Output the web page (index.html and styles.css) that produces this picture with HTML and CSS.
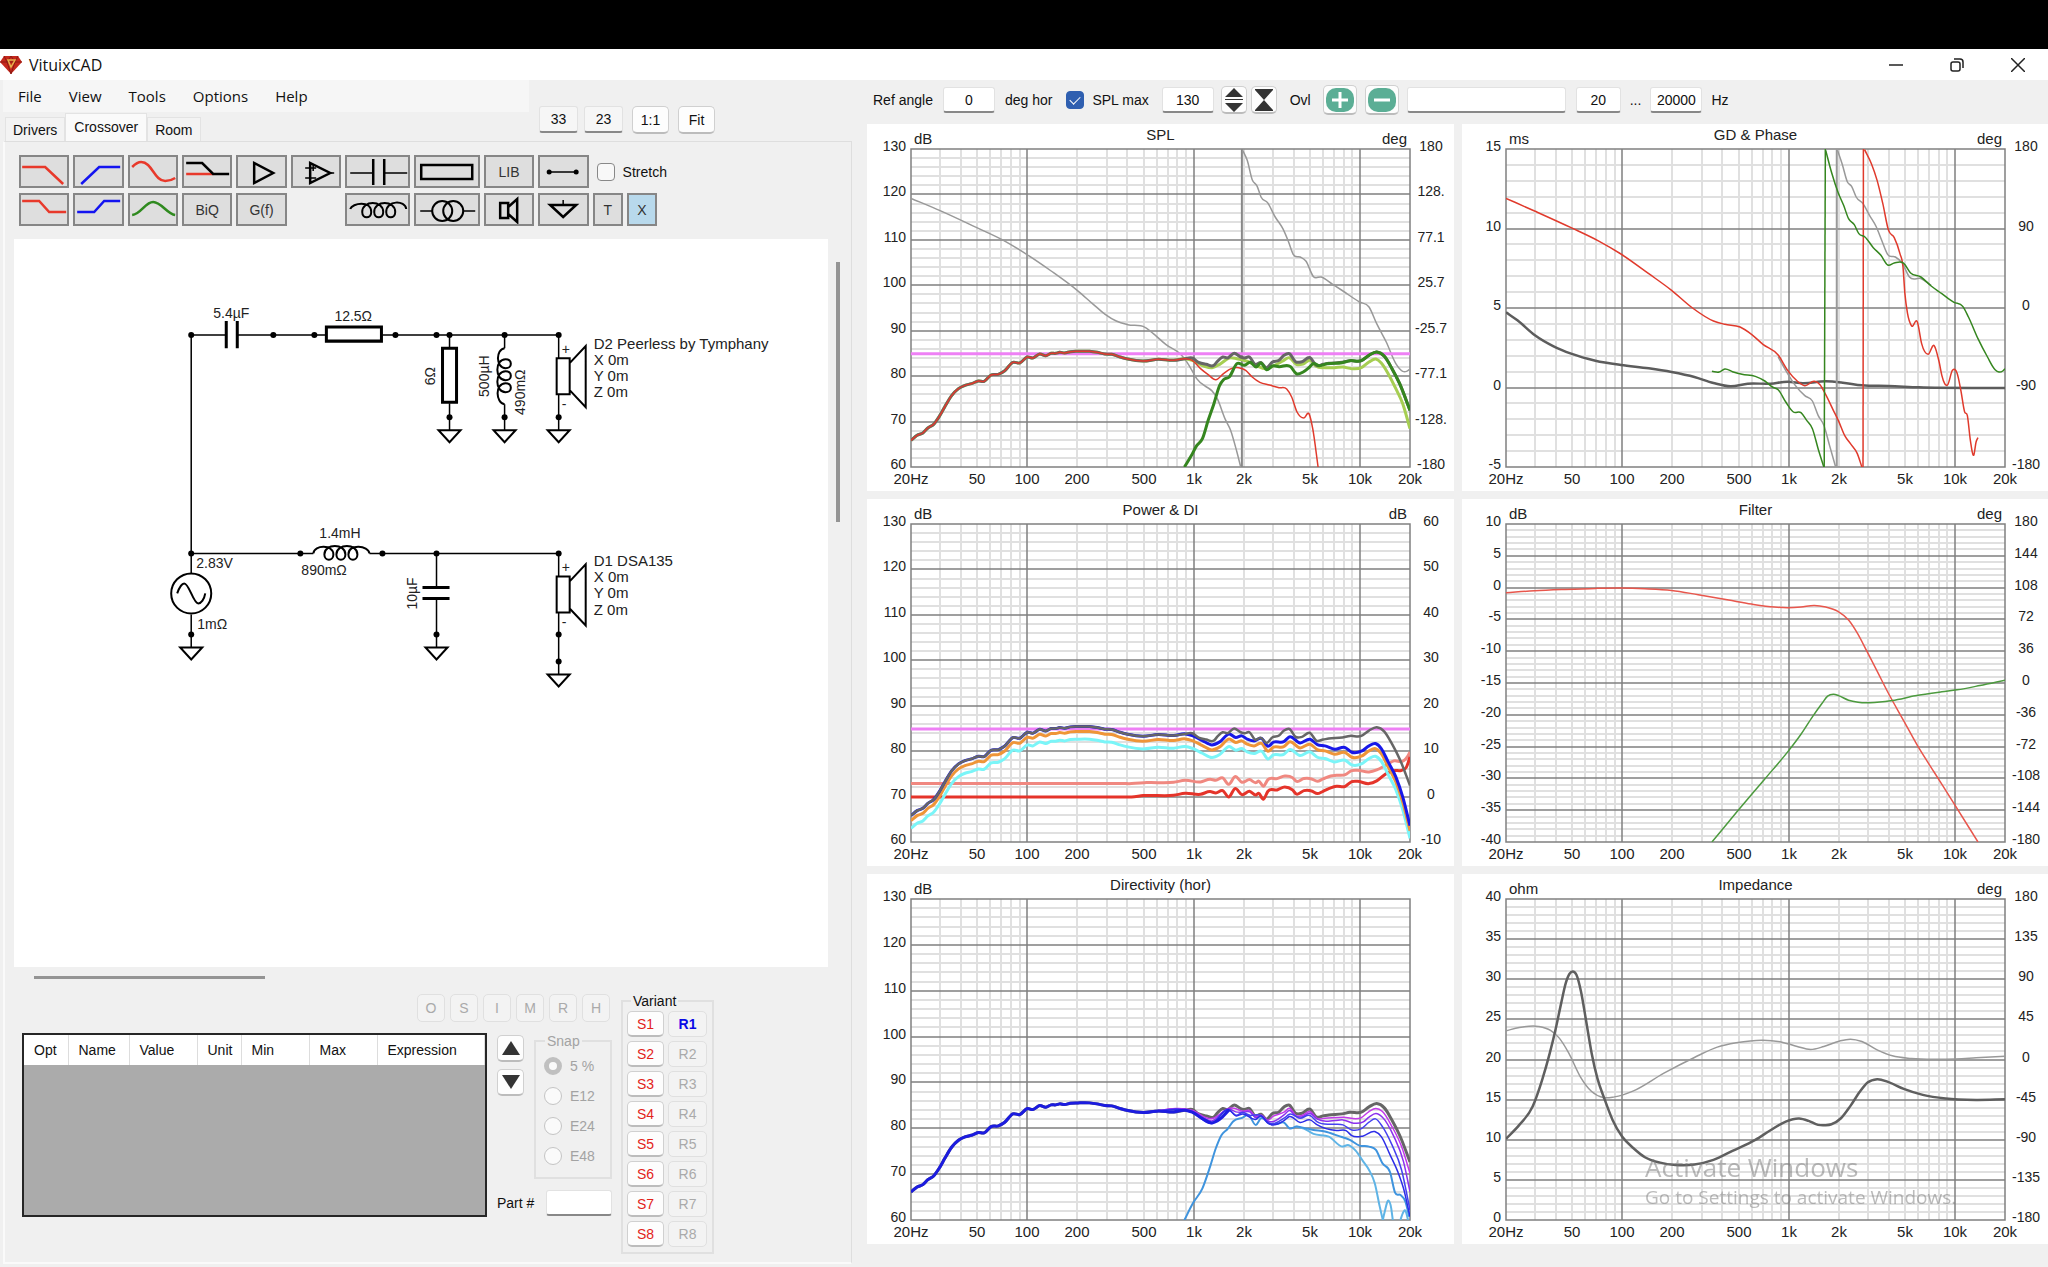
FILE: index.html
```html
<!DOCTYPE html>
<html lang="en">
  <head>
    <meta charset="UTF-8" />
    <meta name="viewport" content="width=device-width, initial-scale=1.0" />
    <title>VituixCAD</title>
    <link rel="stylesheet" href="styles.css">
  </head>
  <body>
    <header class="titlebar">
      <svg class="logo" width="22" height="18" viewBox="0 0 22 18">
        <path d="M4 0h14l4 6-11 12L0 6z" fill="#c5281c" />
        <path d="M4 0l3 6 4-6 4 6 3-6M0 6h22M7 6l4 12 4-12" fill="none" stroke="#8e1a12" />
        <path d="M8 4h7l-4 7z" fill="none" stroke="#e6b34d" stroke-width="1.5" />
      </svg>
      <h1>VituixCAD</h1>
      <div class="window-buttons">
        <button aria-label="Minimize"><svg width="14" height="14"><path d="M0 7h14" /></svg></button>
        <button aria-label="Restore">
          <svg width="14" height="14"><rect x="1" y="4" width="9" height="9" rx="2" /><path d="M4 1h6a3 3 0 0 1 3 3v6" /></svg>
        </button>
        <button aria-label="Close"><svg width="14" height="14"><path d="M0 0l14 14M14 0L0 14" /></svg></button>
      </div>
    </header>

    <main class="workspace">
      <section class="editor">
        <div class="editor-head">
          <div class="nav">
            <nav class="menu">
              <button>File</button>
              <button>View</button>
              <button>Tools</button>
              <button>Options</button>
              <button>Help</button>
            </nav>
            <div class="tabs">
              <button>Drivers</button>
              <button class="active">Crossover</button>
              <button>Room</button>
            </div>
          </div>
          <div class="view-size">
            <input class="field" type="text" value="33" aria-label="Width" />
            <input class="field" type="text" value="23" aria-label="Height" />
            <button class="btn">1:1</button>
            <button class="btn">Fit</button>
          </div>
        </div>

        <div class="page">
          <div class="parts">
            <button aria-label="Low pass"><svg viewBox="0 0 46 29"><path class="red" d="M1 10h23l18 17" /></svg></button>
            <button aria-label="High pass"><svg viewBox="0 0 46 29"><path class="blue" d="M6 27l18-17h21" /></svg></button>
            <button aria-label="Shelf"><svg viewBox="0 0 46 29"><path class="red" d="M2 10C6 6 8 5 11 5c11 0 13 19 24 19 4 0 7-1 10-3" /></svg></button>
            <button aria-label="Attenuator"><svg viewBox="0 0 46 29"><path class="red" d="M2 17h27" /><path d="M2 6h16l11 11h16" /></svg></button>
            <button aria-label="Buffer"><svg viewBox="0 0 46 29"><path d="M16 6v20l19-10z" /></svg></button>
            <button aria-label="Op amp"><svg viewBox="0 0 46 29"><path d="M17 6v20l20-10z" /><path class="thin" d="M12 11h11M12 21h11M37 16h4M20 8v6" /></svg></button>
            <button aria-label="Capacitor"><svg viewBox="0 0 61 29"><path class="thin" d="M3 16h23M37 16h23" /><path d="M26 2v26M37 2v26" /></svg></button>
            <button aria-label="Resistor"><svg viewBox="0 0 61 29"><rect x="5" y="8" width="51" height="14" /></svg></button>
            <button>LIB</button>
            <button aria-label="Wire"><svg viewBox="0 0 46 29"><path class="thin" d="M9 15h27" /><circle cx="9" cy="15" r="2.5" /><circle cx="36" cy="15" r="2.5" /></svg></button>
            <label class="check stretch"><input type="checkbox" />Stretch</label>

            <button aria-label="Low shelf"><svg viewBox="0 0 46 29"><path class="red" d="M1 6h17l10 11h17" /></svg></button>
            <button aria-label="High shelf"><svg viewBox="0 0 46 29"><path class="blue" d="M2 17h17L29 6h16" /></svg></button>
            <button aria-label="Peak"><svg viewBox="0 0 46 29"><path class="green" d="M2 20c9-1 13-13 21-13s14 12 22 13" /></svg></button>
            <button>BiQ</button>
            <button>G(f)</button>
            <button class="coil" aria-label="Inductor"><svg viewBox="0 0 61 29"><path d="M3 14c2-6 21-9 21 3 0 7-9 7-9 0 0-12 21-12 21 0 0 7-9 7-9 0 0-12 21-12 21 0 0 7-9 7-9 0 0-12 19-12 20-3" /></svg></button>
            <button aria-label="Transformer"><svg viewBox="0 0 61 29"><circle class="ring" cx="26" cy="16" r="10" /><circle class="ring" cx="37" cy="16" r="10" /><path class="thin" d="M4 16h12M47 16h12" /></svg></button>
            <button aria-label="Driver"><svg viewBox="0 0 46 29"><path d="M14 8h8v15h-8zM22 12l9-8v23l-9-8" /></svg></button>
            <button aria-label="Ground"><svg viewBox="0 0 46 29"><path d="M10 10h26l-13 12z" /><path class="thin" d="M23 5v5" /></svg></button>
            <button>T</button>
            <button class="selected">X</button>
          </div>

          <div class="sheet-row">
            <div class="sheet">
              <svg viewBox="0 0 813 680" preserveAspectRatio="xMinYMin meet">
                <defs>
                  <g id="ground"><path d="M0 0v13" /><path class="bold" d="M-11 13h22l-11 12z" /><circle r="3" /></g>
                  <g id="driver">
                    <path d="M0 0v23M0 59v22" />
                    <path class="bold" d="M-2 23h13v36h-13zM11 28l16-17v61l-16-17" />
                  </g>
                </defs>
                <path d="M177 96h35M223 96h88M368 96h176M177 96v238M177 375v20M177 314h122M355 314h189M422 314v34M422 359v36M544 395v27M435 96v12M435 164v14M490 96v13M490 165v13" />
                <path class="plate" d="M212 82v27M223 82v27M408 348h27M408 359h27" />
                <path class="plate box" d="M312 88h55v14h-55zM428 109h14v54h-14z" />
                <path class="bold" d="M490 109c-9 1-9 20 1 20 7 0 7-9 0-9-11 0-11 21 0 21 7 0 7-9 0-9-11 0-11 21 0 21 7 0 7-9 0-9-11 0-10 20-1 21" />
                <path class="bold" d="M299 314c1-9 20-9 20 1 0 7-9 7-9 0 0-11 21-11 21 0 0 7-9 7-9 0 0-11 21-11 21 0 0 7-9 7-9 0 0-11 20-9 21-1" />
                <circle class="bold" cx="177" cy="354" r="20" />
                <path class="bold" d="M163 354c2-6 5-10 7-10 5 0 9 20 14 20 3 0 6-4 7-10" />
                <g class="dots">
                  <circle cx="177" cy="96" r="3" /><circle cx="259" cy="96" r="3" /><circle cx="300" cy="96" r="3" />
                  <circle cx="381" cy="96" r="3" /><circle cx="422" cy="96" r="3" /><circle cx="435" cy="96" r="3" />
                  <circle cx="490" cy="96" r="3" /><circle cx="544" cy="96" r="3" /><circle cx="177" cy="314" r="3" />
                  <circle cx="286" cy="314" r="3" /><circle cx="368" cy="314" r="3" /><circle cx="422" cy="314" r="3" />
                  <circle cx="544" cy="314" r="3" /><circle cx="544" cy="395" r="3" />
                  <use href="#ground" x="435" y="178" /><use href="#ground" x="490" y="178" /><use href="#ground" x="544" y="178" />
                  <use href="#ground" x="177" y="395" /><use href="#ground" x="422" y="395" /><use href="#ground" x="544" y="422" />
                </g>
                <use href="#driver" x="544" y="96" /><use href="#driver" x="544" y="314" />
                <text x="199" y="79">5.4µF</text>
                <text x="320" y="82">12.5Ω</text>
                <text x="305" y="299">1.4mH</text>
                <text x="287" y="336">890mΩ</text>
                <text x="182" y="329">2.83V</text>
                <text x="183" y="390">1mΩ</text>
                <text class="up" transform="translate(420 137) rotate(-90)">6Ω</text>
                <text class="up" transform="translate(474 137) rotate(-90)">500µH</text>
                <text class="up" transform="translate(510 153) rotate(-90)">490mΩ</text>
                <text class="up" transform="translate(403 354) rotate(-90)">10µF</text>
                <text x="547" y="115">+</text><text x="547" y="170">-</text>
                <text x="547" y="333">+</text><text x="547" y="388">-</text>
                <g class="driver-text">
                  <text x="579" y="110">D2 Peerless by Tymphany</text>
                  <text x="579" y="126">X 0m</text><text x="579" y="142">Y 0m</text><text x="579" y="158">Z 0m</text>
                  <text x="579" y="327">D1 DSA135</text>
                  <text x="579" y="343">X 0m</text><text x="579" y="359">Y 0m</text><text x="579" y="376">Z 0m</text>
                </g>
              </svg>
            </div>
            <div class="vscroll"></div>
          </div>
          <div class="hscroll"></div>

          <div class="bottom">
            <div class="optimizer">
              <div class="flags">
                <button class="btn" disabled>O</button>
                <button class="btn" disabled>S</button>
                <button class="btn" disabled>I</button>
                <button class="btn" disabled>M</button>
                <button class="btn" disabled>R</button>
                <button class="btn" disabled>H</button>
              </div>
              <div class="param-row">
                <div class="params">
                  <table>
                    <colgroup>
                      <col class="w-opt" /><col class="w-name" /><col class="w-num" /><col class="w-opt" /><col class="w-num" /><col class="w-num" /><col />
                    </colgroup>
                    <thead>
                      <tr><th>Opt</th><th>Name</th><th>Value</th><th>Unit</th><th>Min</th><th>Max</th><th>Expression</th></tr>
                    </thead>
                  </table>
                </div>
                <div class="side">
                  <div class="move">
                    <button class="btn" aria-label="Move up"><svg width="18" height="14"><path d="M0 14L9 0l9 14z" /></svg></button>
                    <button class="btn" aria-label="Move down"><svg width="18" height="14"><path d="M0 0h18L9 14z" /></svg></button>
                  </div>
                  <fieldset class="snap" disabled>
                    <legend>Snap</legend>
                    <label><input type="radio" name="snap" checked />5 %</label>
                    <label><input type="radio" name="snap" />E12</label>
                    <label><input type="radio" name="snap" />E24</label>
                    <label><input type="radio" name="snap" />E48</label>
                  </fieldset>
                  <div class="part-no">
                    <label for="partNo">Part #</label>
                    <input class="field" type="text" id="partNo" />
                  </div>
                </div>
              </div>
            </div>
            <fieldset class="variant">
              <legend>Variant</legend>
              <button class="btn save">S1</button><button class="btn current">R1</button>
              <button class="btn save">S2</button><button class="btn" disabled>R2</button>
              <button class="btn save">S3</button><button class="btn" disabled>R3</button>
              <button class="btn save">S4</button><button class="btn" disabled>R4</button>
              <button class="btn save">S5</button><button class="btn" disabled>R5</button>
              <button class="btn save">S6</button><button class="btn" disabled>R6</button>
              <button class="btn save">S7</button><button class="btn" disabled>R7</button>
              <button class="btn save">S8</button><button class="btn" disabled>R8</button>
            </fieldset>
          </div>
        </div>
      </section>

      <section class="results">
        <div class="options">
          <label class="ref">Ref angle <input class="field" type="text" value="0" /> deg hor</label>
          <label class="check"><input type="checkbox" checked />SPL max</label>
          <input class="field" type="text" value="130" aria-label="SPL max" />
          <div class="zoomers">
            <button class="btn" aria-label="Expand"><svg width="18" height="24"><path d="M0 9l9-9 9 9zM0 11h18v1H0zM0 15h18l-9 9z" /></svg></button>
            <button class="btn" aria-label="Collapse"><svg width="18" height="22"><path d="M0 0h18v1L9 11l9 10v1H0v-1l9-10L0 1z" /></svg></button>
          </div>
          <span>Ovl</span>
          <div class="overlay">
            <button class="btn" aria-label="Add overlay"><svg width="28" height="24"><rect width="28" height="24" rx="10" /><path d="M6 12h16M14 4v16" /></svg></button>
            <button class="btn" aria-label="Remove overlay"><svg width="28" height="24"><rect width="28" height="24" rx="10" /><path d="M6 12h16" /></svg></button>
            <input class="field" type="text" aria-label="Overlay" />
          </div>
          <div class="range">
            <input class="field" type="text" value="20" aria-label="From" />
            <span>...</span>
            <input class="field" type="text" value="20000" aria-label="To" />
            <span>Hz</span>
          </div>
        </div>
        <div class="charts">
          <figure class="chart" id="spl"></figure>
          <figure class="chart" id="gd"></figure>
          <figure class="chart" id="power"></figure>
          <figure class="chart" id="filter"></figure>
          <figure class="chart" id="directivity"></figure>
          <figure class="chart" id="impedance"></figure>
        </div>
      </section>
    </main>

    <div class="activate">
      <p class="activate-title">Activate Windows</p>
      <p>Go to Settings to activate Windows.</p>
    </div>

    <script src="charts.js"></script>
  </body>
</html>
```
FILE: styles.css
```css
* {
  box-sizing: border-box;
}

body {
  margin: 0;
  min-height: 100vh;
  display: flex;
  flex-direction: column;
  border-top: 49px solid #000;
  background-color: #f0f0f0;
  color: #111;
  font-family: "Liberation Sans", Arial, sans-serif;
  font-size: 14px;
}

button,
input {
  font: inherit;
  color: inherit;
  margin: 0;
}

button {
  padding: 0;
}

button svg {
  display: block;
}

/* title bar */
.titlebar {
  display: flex;
  align-items: center;
  height: 31px;
  background-color: #fff;
  font-family: "Open Sans", sans-serif;
}

.titlebar h1 {
  margin: 0 0 0 7px;
  font-size: 16px;
  font-weight: normal;
}

.window-buttons {
  display: flex;
  margin-left: auto;
}

.window-buttons button {
  display: flex;
  align-items: center;
  justify-content: center;
  width: 61px;
  height: 28px;
  border: 0;
  background: none;
}

.window-buttons svg {
  fill: none;
  stroke: #222;
  stroke-width: 1.5;
}

.workspace {
  flex: 1;
  display: grid;
  grid-template-columns: 867fr 1181fr;
}

/* shared controls */
.field {
  width: 52px;
  height: 26px;
  padding: 0;
  border: 1px solid #e2e2e2;
  border-bottom: 2px solid #888;
  border-radius: 3px;
  background-color: #fff;
  text-align: center;
}

.btn {
  display: flex;
  align-items: center;
  justify-content: center;
  border: 1px solid #d0d0d0;
  border-bottom: 2px solid #bcbcbc;
  border-radius: 5px;
  background-color: #fdfdfd;
}

.btn:disabled {
  border: 1px solid #e0e0e0;
  background-color: #f3f3f3;
  color: #aaa;
}

.check {
  display: flex;
  align-items: center;
  gap: 8px;
  white-space: nowrap;
}

.check input {
  appearance: none;
  flex-shrink: 0;
  width: 18px;
  height: 18px;
  border: 1px solid #888;
  border-radius: 4px;
  background-color: #f8f8f8;
}

.check input:checked {
  border-color: #2f5fb0;
  background-color: #2f5fb0;
}

.check input:checked::before {
  content: "";
  display: block;
  width: 9px;
  height: 5px;
  margin: 4px 0 0 3px;
  border-left: 1px solid #fff;
  border-bottom: 1px solid #fff;
  transform: rotate(-45deg);
}

/* left side */
.editor {
  display: flex;
  flex-direction: column;
  padding: 0 15px 3px 3px;
}

.editor-head {
  display: flex;
  height: 61px;
}

.nav {
  width: 526px;
}

.menu {
  display: flex;
  align-items: center;
  gap: 27px;
  height: 32px;
  padding-left: 15px;
  background-color: #f6f6f6;
  font-family: "Open Sans", sans-serif;
  font-size: 15px;
}

.menu button {
  border: 0;
  background: none;
}

.tabs {
  display: flex;
  align-items: flex-end;
  height: 29px;
  padding: 0 2px;
}

.tabs button {
  height: 24px;
  padding: 0 7px;
  border: 1px solid #e3e3e3;
  border-bottom: 0;
  background-color: #f3f3f3;
}

.tabs .active {
  height: 28px;
  padding: 0 8px 2px;
  background-color: #fafafa;
}

.view-size {
  display: flex;
  gap: 6px;
  padding: 26px 0 0 10px;
}

.view-size .field {
  width: 39px;
  height: 27px;
  background-color: #f6f6f6;
}

.view-size .btn {
  width: 37px;
  height: 28px;
  margin-left: 3px;
}

.page {
  flex: 1;
  display: flex;
  flex-direction: column;
  padding: 13px 23px 8px 9px;
  border: 1px solid #dedede;
  border-left: 2px solid #fafafa;
  border-bottom: 2px solid #fafafa;
}

.parts {
  display: grid;
  grid-template-columns: repeat(6, 50fr) 65fr 65fr 50fr 50fr 30fr 30fr;
  grid-auto-rows: 33px;
  gap: 5px 4px;
  width: 638px;
  margin-left: 5px;
}

.parts button {
  border: 2px solid #868686;
  background-color: #dedede;
  color: #333;
}

.parts .selected {
  background-color: #b8d9ec;
}

.parts .coil {
  grid-column: 7;
}

.parts svg {
  width: 100%;
  height: 100%;
  fill: none;
  stroke: #000;
  stroke-width: 2.5;
}

.parts circle {
  fill: #000;
  stroke: none;
}

.parts .ring {
  fill: none;
  stroke: #000;
  stroke-width: 2;
}

.parts .thin {
  stroke-width: 1.5;
}

.parts .coil svg {
  stroke-width: 2;
}

.parts .red {
  stroke: #e8392b;
}

.parts .blue {
  stroke: #1414f0;
}

.parts .green {
  stroke: #2f8a1f;
}

.stretch {
  grid-column: 11 / 13;
  padding-left: 4px;
}

.sheet-row {
  flex: 1;
  display: flex;
  margin-top: 13px;
}

.sheet {
  flex: 1;
  background-color: #fff;
}

.sheet svg {
  display: block;
  width: 100%;
  fill: none;
  stroke: #000;
  stroke-width: 1.5;
}

.sheet .bold {
  fill: none;
  stroke-width: 2;
}

.sheet .plate {
  stroke-width: 3;
}

.sheet .box {
  fill: none;
}

.dots circle,
#ground circle {
  fill: #000;
  stroke: none;
}

.sheet text {
  fill: #222;
  stroke: none;
  font-size: 14px;
}

.sheet .up {
  text-anchor: middle;
}

.sheet .driver-text text {
  font-size: 15px;
}

.vscroll {
  width: 4px;
  height: 260px;
  margin: 23px -12px 0 8px;
  background-color: #949494;
}

.hscroll {
  width: 231px;
  height: 3px;
  margin: 9px 0 14px 20px;
  background-color: #949494;
}

.bottom {
  display: flex;
  align-items: flex-start;
  gap: 9px;
  padding: 0 114px 0 8px;
}

.optimizer {
  flex: 1;
}

.flags {
  display: flex;
  justify-content: flex-end;
  gap: 5px;
  margin-bottom: 11px;
  padding: 1px 2px 0 0;
}

.flags .btn {
  width: 28px;
  height: 28px;
}

.param-row {
  display: flex;
  gap: 10px;
}

.params {
  flex: 1;
  height: 184px;
  border: 2px solid #262626;
  background-color: #ababab;
}

.params table {
  width: 100%;
  table-layout: fixed;
  border-collapse: collapse;
}

.params th {
  height: 30px;
  padding: 0 0 0 10px;
  border-right: 1px solid #ddd;
  background-color: #fff;
  font-weight: normal;
  text-align: left;
}

.w-opt {
  width: 44px;
}

.w-name {
  width: 61px;
}

.w-num {
  width: 68px;
}

.side {
  display: grid;
  grid-template-columns: 27px 78px;
  grid-template-rows: 146px 27px;
  gap: 10px;
}

.move .btn {
  width: 27px;
  height: 27px;
  margin: 2px 0 7px;
}

.move svg,
.zoomers svg {
  fill: #333;
}

fieldset {
  margin: 0;
  border: 2px solid #e0e0e0;
}

.snap {
  display: flex;
  flex-direction: column;
  gap: 12px;
  padding: 8px;
  color: #a3a3a3;
}

.snap legend {
  margin-left: 1px;
  padding: 0 2px;
}

.snap label {
  display: flex;
  align-items: center;
  gap: 8px;
  height: 18px;
  white-space: nowrap;
}

.snap input {
  appearance: none;
  width: 18px;
  height: 18px;
  border: 1px solid #c4c4c4;
  border-radius: 50%;
  background-color: #fafafa;
}

.snap input:checked {
  border: 5px solid #c0c0c0;
}

.part-no {
  grid-column: 1 / 3;
  display: flex;
  align-items: center;
  justify-content: space-between;
}

.part-no .field {
  width: 66px;
}

.variant {
  display: grid;
  grid-template-columns: 37px 39px;
  grid-auto-rows: 26px;
  gap: 4px;
  width: 93px;
  padding: 2px 4px 5px;
}

.variant legend {
  margin-left: 4px;
  padding: 0 2px;
}

.save {
  color: #e2231a;
}

.current {
  border: 1px solid #e0e0e0;
  background-color: #f3f3f3;
  color: #0a0ae6;
  font-weight: bold;
}

/* right side */
.results {
  display: flex;
  flex-direction: column;
}

.options {
  display: flex;
  align-items: center;
  gap: 13px;
  height: 44px;
  padding: 0 6px 4px;
}

.ref {
  display: flex;
  align-items: center;
  gap: 10px;
}

.options .check {
  margin-left: 1px;
}

.zoomers {
  display: flex;
  gap: 4px;
  margin-left: -6px;
}

.zoomers .btn {
  width: 26px;
  height: 28px;
}

.overlay {
  display: flex;
  align-items: center;
  gap: 8px;
  margin-left: -1px;
}

.overlay .btn {
  width: 34px;
  height: 30px;
}

.overlay svg {
  fill: #5bae95;
}

.overlay path {
  stroke: #fff;
  stroke-width: 3;
}

.overlay .field {
  width: 159px;
}

.range {
  display: flex;
  align-items: center;
  gap: 9px;
  margin-left: -3px;
}

.range .field:first-child {
  width: 45px;
}

.charts {
  flex: 1;
  display: grid;
  grid-template-columns: 1fr 1fr;
  grid-template-rows: 367fr 367fr 370fr;
  gap: 8px;
  padding-bottom: 23px;
}

.chart {
  min-width: 0;
  min-height: 260px;
  margin: 0;
  background-color: #fff;
  overflow: hidden;
}

.chart svg {
  display: block;
}

.chart text {
  fill: #222;
  font-size: 15px;
}

.chart .tick {
  font-size: 14px;
}

.minor {
  stroke: #e0e0e0;
  stroke-width: 2;
}

.major {
  fill: none;
  stroke: #808080;
  stroke-width: 1.5;
}

.trace {
  fill: none;
  stroke-linejoin: round;
  vector-effect: non-scaling-stroke;
}

.activate {
  position: fixed;
  right: 83px;
  bottom: 56px;
  width: 320px;
  color: rgba(120, 120, 120, 0.5);
  font-family: "Open Sans", sans-serif;
  font-size: 19px;
  line-height: 28px;
  white-space: nowrap;
  pointer-events: none;
}

.activate p {
  margin: 0;
}

.activate-title {
  font-size: 26px;
  line-height: 32px;
}
```
FILE: charts.js
```js
const FREQS = [20, 50, 100, 200, 500, 1000, 2000, 5000, 10000, 20000];
const PAD = { top: 25, right: 44, bottom: 24, left: 44 };

const shift = (points, dy) =>
  points.replace(/(\d+),(\d+)/g, (m, x, y) => `${x},${+y + dy}`);

// on-axis response of the woofer range, shared by several charts
const low =
  "134,1200 150,1185 165,1178 178,1163 193,1152 208,1128 222,1100 240,1066 258,1045 275,1035 292,1030 310,1022 325,1023 343,1004 362,1002 378,992 400,966 418,968 438,950 452,953 470,941 486,946 500,939 512,939 522,936 535,938 550,934 570,933 600,933 620,936 640,941 658,942 680,950 700,956 740,962 780,957 820,960 850,955 ";
const total =
  low +
  "868,953 885,966 905,972 925,975 935,962 948,950 960,953 978,939 995,950 1005,953 1018,950 1032,972 1048,967 1062,982 1078,965 1095,960 1108,945 1122,940 1138,964 1155,964 1176,952 1192,975 1210,972 1225,969 1260,966 1280,961 1310,961 1330,945 1350,935 1370,948 1390,985 1410,1030 1437,1110";
const power =
  low +
  "868,960 895,975 920,988 940,979 965,955 982,966 998,961 1012,971 1030,976 1050,969 1066,992 1080,980 1108,978 1122,964 1150,982 1176,971 1195,987 1215,991 1240,1001 1268,996 1285,1010 1310,1007 1330,991 1347,984 1362,999 1380,1039 1400,1084 1418,1144 1437,1230";

const charts = {
  spl: {
    title: "SPL",
    left: ["dB", 130, 120, 110, 100, 90, 80, 70, 60],
    right: ["deg", "180", "128.", "77.1", "25.7", "-25.7", "-77.1", "-128.", "-180"],
    area: [134, 326, 1303, 954],
    traces: [
      ["#999", 1.5, "134,474 210,511 300,559 380,603 436,642 500,692 568,750 610,792 641,822 670,842 700,853 745,861 770,883 800,913 840,944 855,966 880,1015 935,1078 955,1138 968,1168 985,1235 995,1280"],
      ["#888", 2, "998,1280 998,326"],
      ["#999", 1.5, "1000,330 1012,360 1025,418 1038,438 1048,470 1065,487 1085,530 1105,565 1120,605 1132,642 1150,650 1165,662 1185,709 1205,710 1235,732 1262,752 1305,785 1330,800 1350,850 1375,905 1400,970 1418,993 1428,993 1437,986"],
      ["#ee80f5", 3, "134,940 1437,940"],
      ["#a6ce52", 3, low + "868,960 900,978 920,982 940,972 965,953 985,955 1010,962 1035,975 1060,985 1085,974 1105,962 1122,952 1140,972 1158,971 1176,960 1192,978 1215,982 1240,982 1262,980 1285,985 1310,982 1330,965 1348,956 1362,968 1380,1000 1400,1045 1418,1090 1437,1165"],
      ["#666", 3, total],
      ["#e03a2c", 1.5, low + "868,960 890,985 910,1003 930,1018 950,1000 970,985 990,982 1008,990 1025,1010 1045,1026 1070,1034 1095,1042 1115,1046 1128,1070 1142,1115 1160,1133 1174,1122 1183,1165 1197,1280"],
      ["#35861f", 3, "848,1280 865,1248 880,1216 895,1195 910,1140 925,1090 940,1035 950,1018 965,1010 985,970 1005,975 1020,966 1035,980 1048,968 1062,988 1078,977 1095,979 1125,979 1140,1000 1158,995 1172,983 1184,970 1200,976 1220,970 1260,967 1280,961 1310,961 1330,945 1350,935 1370,948 1390,985 1410,1030 1437,1110"],
    ],
  },
  gd: {
    title: "GD & Phase",
    left: ["ms", 15, 10, 5, 0, -5],
    right: ["deg", 180, 90, 0, -90, -180],
    area: [145, 326, 1311, 954],
    traces: [
      ["#5c5c5c", 2.5, "145,816 175,840 220,884 270,918 316,940 380,961 447,974 520,984 580,995 640,1010 690,1028 735,1038 780,1030 840,1030 885,1024 925,1029 985,1023 1030,1027 1080,1035 1150,1037 1230,1041 1456,1043"],
      ["#999", 1.5, "860,950 885,1000 905,1035 930,1066 950,1082 965,1125 980,1155 995,1215 1011,1280"],
      ["#999", 2, "1014,1280 1014,326"],
      ["#999", 1.5, "1016,330 1028,370 1042,425 1053,438 1065,470 1083,490 1100,525 1118,560 1132,600 1148,643 1168,650 1185,667 1205,710 1235,715 1262,735"],
      ["#e03a2c", 1.5, "145,474 220,512 316,562 390,603 447,641 520,700 580,750 635,803 690,842 720,852 760,860 790,882 820,912 860,944 885,990 910,1022 930,1036 955,1023 970,1033 985,1063 1005,1110 1018,1140 1035,1186 1050,1210 1068,1240 1080,1280"],
      ["#e03a2c", 1.5, "1083,1280 1084,326"],
      ["#e03a2c", 1.5, "1087,328 1105,370 1120,420 1135,490 1150,570 1165,592 1180,640 1188,680 1193,760 1200,820 1210,856 1226,846 1237,910 1254,942 1270,916 1283,965 1290,1005 1305,1034 1318,990 1330,998 1340,1050 1350,1115 1357,1125 1365,1200 1374,1244 1380,1205 1385,1192"],
      ["#35861f", 1.5, "686,993 705,995 720,986 740,994 765,1002 800,1008 825,1022 845,1040 860,1048 880,1085 900,1115 920,1117 935,1140 950,1165 965,1225 980,1280"],
      ["#35861f", 1.5, "981,1280 984,326"],
      ["#35861f", 1.5, "985,330 1000,395 1018,458 1032,495 1045,535 1060,553 1072,580 1088,590 1110,622 1130,645 1148,674 1165,668 1190,669 1208,698 1235,710 1262,737 1290,760 1322,786 1345,798 1360,830 1385,895 1410,950 1430,988 1440,995 1450,992 1456,985"],
    ],
  },
  power: {
    title: "Power & DI",
    left: ["dB", 130, 120, 110, 100, 90, 80, 70, 60],
    right: ["dB", 60, 50, 40, 30, 20, 10, 0, -10],
    area: [134, 102, 1303, 953],
    traces: [
      ["#ee80f5", 3, "134,716 1437,716"],
      ["#f08880", 3, "134,880 690,880 710,880 750,877 820,876 850,870 890,875 915,867 930,870 948,863 964,882 980,859 998,876 1018,868 1035,877 1042,872 1054,888 1066,868 1090,865 1110,857 1130,862 1140,873 1160,865 1180,866 1195,873 1210,866 1230,857 1245,855 1268,853 1285,841 1300,840 1330,845 1350,839 1375,824 1395,812 1420,812 1430,800 1437,785"],
      ["#e5342a", 3, "134,920 690,920 710,920 740,916 820,915 850,909 890,912 915,904 930,908 948,901 964,920 980,895 998,913 1018,903 1035,914 1042,909 1054,927 1066,903 1090,899 1110,890 1130,899 1140,911 1160,901 1180,902 1195,910 1210,903 1230,893 1245,888 1268,888 1285,874 1300,873 1330,880 1350,872 1375,850 1395,841 1415,840 1428,830 1437,800"],
      ["#7af5f8", 3, shift(power, -186)],
      ["#ef9538", 3, shift(power, -209)],
      ["#1818e8", 3, shift(power, -224)],
      ["#666", 2.5, shift(total, -224)],
    ],
  },
  filter: {
    title: "Filter",
    left: ["dB", 10, 5, 0, -5, -10, -15, -20, -25, -30, -35, -40],
    right: ["deg", 180, 144, 108, 72, 36, 0, -36, -72, -108, -144, -180],
    area: [145, 102, 1311, 953],
    traces: [
      ["#e8564c", 1.5, "145,308 220,302 300,298 380,295 447,294 510,296 580,301 650,314 730,330 790,342 850,351 885,353 920,351 955,346 985,351 1017,364 1045,390 1070,433 1092,481 1120,543 1150,610 1190,692 1225,764 1270,846 1320,936 1385,1055"],
      ["#4c9a3e", 1.5, "686,1055 755,960 825,866 885,785 920,732 950,680 975,640 990,618 1005,612 1020,617 1045,630 1070,636 1090,638 1120,636 1160,631 1220,617 1290,605 1330,599 1390,586 1456,570"],
    ],
  },
  directivity: {
    title: "Directivity (hor)",
    left: ["dB", 130, 120, 110, 100, 90, 80, 70, 60],
    right: [""],
    area: [134, 118, 1303, 962],
    traces: [
      ["#5fb4e6", 2, "1140,800 1160,806 1185,822 1225,830 1262,860 1275,855 1295,872 1315,905 1330,930 1345,970 1358,1040 1366,1080"],
      ["#5fb4e6", 2, "1366,1080 1370,1060 1381,1022 1388,1045 1392,1080"],
      ["#5fb4e6", 2, "1412,1080 1418,1060 1425,1052 1432,1080"],
      ["#3f94de", 2, "848,1080 870,1030 895,985 915,920 930,865 945,825 960,808 975,785 1000,773 1015,765 1035,795 1048,775 1068,790 1090,792 1108,788 1122,805 1140,800 1160,804 1185,810 1215,815 1250,828 1280,840 1305,857 1330,860 1348,870 1365,910 1385,937 1398,998 1412,1005 1425,1025 1435,1070"],
      ["#666", 3, shift(total, -204)],
      ["#c238ea", 1.5, "740,757 868,751 920,776 948,757 965,745 978,745 1000,754 1018,752 1035,770 1048,765 1066,781 1080,769 1108,757 1122,745 1140,768 1155,767 1176,755 1195,776 1215,775 1262,772 1310,773 1330,755 1348,746 1365,755 1390,800 1415,860 1437,940"],
      ["#8a30ee", 1.5, "740,758 868,753 920,783 965,747 982,756 1000,757 1018,756 1035,773 1048,767 1066,784 1108,765 1122,752 1140,770 1155,771 1176,760 1195,778 1240,782 1262,780 1290,790 1315,786 1330,772 1348,761 1365,772 1395,830 1420,905 1437,995"],
      ["#4440f0", 1.5, "740,758 868,756 920,788 965,750 982,766 1000,758 1018,766 1048,767 1066,788 1108,775 1122,763 1150,775 1176,767 1195,786 1240,793 1262,795 1285,810 1310,806 1330,787 1347,777 1365,800 1390,855 1415,930 1437,1050"],
      ["#2c2ce8", 1.5, "740,759 868,757 920,791 965,750 982,768 1000,762 1035,778 1048,768 1066,790 1108,782 1122,770 1150,788 1176,780 1195,795 1245,812 1270,812 1285,827 1315,828 1345,815 1362,830 1385,885 1405,935 1420,985 1437,1070"],
      ["#1c1ce0", 3, shift(low, -204) + "868,757 895,776 920,789 940,778 965,750"],
    ],
  },
  impedance: {
    title: "Impedance",
    left: ["ohm", 40, 35, 30, 25, 20, 15, 10, 5, 0],
    right: ["deg", 180, 135, 90, 45, 0, -45, -90, -135, -180],
    area: [145, 118, 1311, 962],
    traces: [
      ["#999", 1.5, "145,513 180,503 230,500 262,512 285,535 310,580 340,650 370,695 400,713 430,711 480,693 560,640 640,593 700,562 750,549 820,541 870,547 910,560 945,569 980,560 1020,544 1050,538 1080,545 1120,570 1160,588 1210,596 1300,598 1380,594 1456,589"],
      ["#5f5f5f", 2.5, "145,837 180,795 215,740 240,660 260,580 275,510 290,430 302,370 312,342 320,335 330,345 342,395 355,480 370,580 385,655 403,715 425,780 450,830 480,865 510,892 550,908 590,915 640,914 690,900 740,873 800,840 840,811 880,785 915,776 940,783 965,795 985,796 1000,793 1025,775 1050,738 1075,695 1095,668 1120,658 1150,667 1190,687 1240,705 1300,716 1380,720 1456,718"],
    ],
  },
};

// cubic through the points, slopes weighted by the spacing on the x axis
function smooth(points) {
  const p = points.trim().split(" ").map((s) => s.split(",").map(Number));
  if (p.length === 2) return `M${p[0]}L${p[1]}`;
  const last = p.length - 1;
  const step = (i) => (p[i + 1][1] - p[i][1]) / (p[i + 1][0] - p[i][0]);
  const slope = (i) => {
    if (i === 0) return step(0);
    if (i === last) return step(last - 1);
    const h0 = p[i][0] - p[i - 1][0];
    const h1 = p[i + 1][0] - p[i][0];
    return (step(i - 1) * h1 + step(i) * h0) / (h0 + h1);
  };
  let d = `M${p[0]}`;
  for (let i = 0; i < last; i++) {
    const [ax, ay] = p[i];
    const [bx, by] = p[i + 1];
    const t = (bx - ax) / 3;
    d += `C${ax + t} ${ay + slope(i) * t} ${bx - t} ${by - slope(i + 1) * t} ${bx} ${by}`;
  }
  return d;
}

function freqLabel(f) {
  if (f === 20) return "20Hz";
  return f >= 1000 ? f / 1000 + "k" : f;
}

function drawChart(el, chart) {
  const width = el.clientWidth;
  const height = el.clientHeight;
  const x0 = PAD.left;
  const y0 = PAD.top;
  const w = width - PAD.left - PAD.right;
  const h = height - PAD.top - PAD.bottom;
  const x1 = x0 + w;
  const y1 = y0 + h;
  const fx = (f) => Math.round(x0 + (w * Math.log10(f / 20)) / 3);

  let minor = "";
  let major = `M${x0} ${y0}h${w}v${h}h${-w}z`;
  for (let decade = 10; decade <= 10000; decade *= 10) {
    for (let n = 1; n < 10; n++) {
      const f = decade * n;
      if (f <= 20 || f >= 20000) continue;
      const line = `M${fx(f)} ${y0}v${h}`;
      if (n === 1) major += line;
      else minor += line;
    }
  }

  const [unit, ...ticks] = chart.left;
  const [unit2, ...ticks2] = chart.right;
  const steps = ticks.length - 1;
  for (let i = 1; i < steps * 5; i++) {
    const line = `M${x0} ${Math.round(y0 + (h * i) / (steps * 5))}h${w}`;
    if (i % 5) minor += line;
    else major += line;
  }

  let labels = `
    <text x="${x0 + w / 2}" y="${y0 - 9}" text-anchor="middle">${chart.title.replace("&", "&amp;")}</text>
    <text x="${x0 + 3}" y="${y0 - 5}">${unit}</text>
    <text x="${x1 - 3}" y="${y0 - 5}" text-anchor="end">${unit2}</text>`;
  ticks.forEach((t, i) => {
    labels += `<text class="tick" x="${x0 - 5}" y="${y0 + (h * i) / steps + 2}" text-anchor="end">${t}</text>`;
  });
  ticks2.forEach((t, i) => {
    labels += `<text class="tick" x="${x1 + 21}" y="${y0 + (h * i) / steps + 2}" text-anchor="middle">${t}</text>`;
  });
  FREQS.forEach((f) => {
    labels += `<text x="${fx(f)}" y="${y1 + 17}" text-anchor="middle">${freqLabel(f)}</text>`;
  });

  const traces = chart.traces
    .map(([color, size, points]) => `<path class="trace" stroke="${color}" stroke-width="${size}" d="${smooth(points)}" />`)
    .join("");

  el.innerHTML = `
    <svg width="${width}" height="${height}" role="img" aria-label="${chart.title.replace("&", "&amp;")}">
      <path class="minor" d="${minor}" />
      <path class="major" d="${major}" />
      <svg x="${x0}" y="${y0}" width="${w}" height="${h}" viewBox="${chart.area.join(" ")}" preserveAspectRatio="none">${traces}</svg>
      ${labels}
    </svg>`;
}

function drawAll() {
  const figures = document.querySelectorAll(".chart");
  figures.forEach((el) => (el.innerHTML = ""));
  figures.forEach((el) => drawChart(el, charts[el.id]));
}

drawAll();
window.addEventListener("resize", drawAll);
```
